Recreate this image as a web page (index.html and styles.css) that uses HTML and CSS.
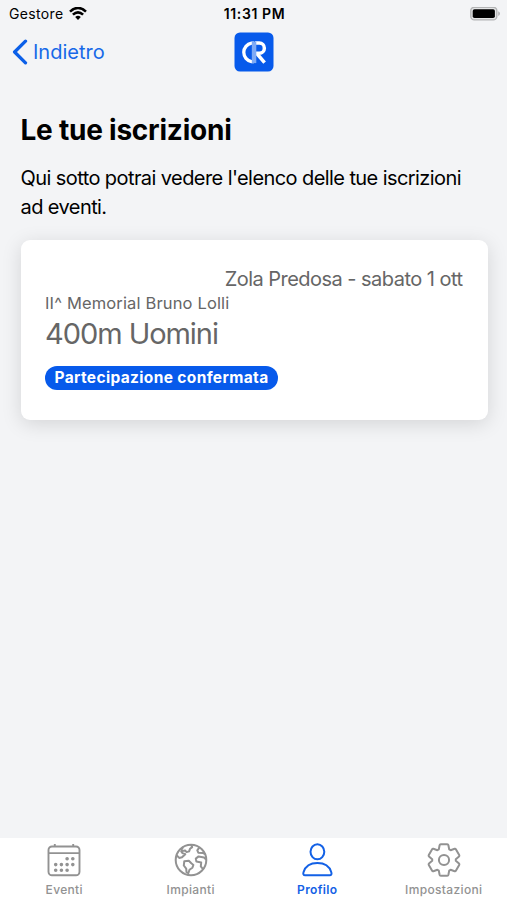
FILE: index.html
```html
<!DOCTYPE html>
<html lang="it">
<head>
  <meta charset="UTF-8">
  <meta name="viewport" content="width=device-width, initial-scale=1.0">
  <title>Le tue iscrizioni</title>
  <link rel="stylesheet" href="styles.css">
</head>
<body>
  <!-- Status bar -->
  <div class="status-bar">
    <div class="carrier">
      <span class="carrier-name">Gestore</span>
      <svg width="18" height="14" viewBox="0 0 18 14" fill="none" stroke="#000" stroke-width="2.6">
        <path d="M1 4.6Q9-2.6 17 4.6M3.9 7.6Q9 3 14.1 7.6"/>
        <path d="M6.2 10Q9 7.7 11.8 10L9 12.9Z" fill="#000" stroke="none"/>
      </svg>
    </div>
    <span class="clock">11:31 PM</span>
    <svg class="battery" width="30" height="14" viewBox="0 0 30 14">
      <rect x="0.8" y="0.3" width="26" height="12.6" rx="3.5" fill="#e4e5e6" stroke="#b3b4b5" stroke-width="1.4"/>
      <rect x="2.7" y="2.2" width="22.2" height="8.8" rx="1.8" fill="#000"/>
      <path d="M28.2 4.2Q30 4.9 30 6.6Q30 8.3 28.2 9Z" fill="#b3b4b5"/>
    </svg>
  </div>

  <!-- Navigation -->
  <header class="toolbar">
    <a class="back-button" href="#">
      <svg width="16" height="26" viewBox="0 0 16 26" fill="none" stroke="#0b5fe8" stroke-width="3.3" stroke-linecap="round" stroke-linejoin="round">
        <path d="M13.5 2.2L2.6 13L13.5 23.8"/>
      </svg>
      <span>Indietro</span>
    </a>
    <svg class="logo" width="40" height="40" viewBox="0 0 40 40">
      <rect x="0.5" y="0.5" width="39" height="39" rx="5.5" fill="#075aeb"/>
      <path d="M20 11.1H17.5A9.4 9.4 0 0 0 17.5 29.6H20" fill="none" stroke="#fff" stroke-width="3.3"/>
      <path d="M21 11.1H25.3A5 5 0 0 1 25.3 21.2H22.5L30.6 30.6" fill="none" stroke="#fff" stroke-width="3.5"/>
      <path d="M17.8 9.5H22.3V31.1H17.8Z" fill="#7faaf5"/>
    </svg>
  </header>

  <!-- Page content -->
  <main class="content">
    <h1>Le tue iscrizioni</h1>
    <p class="intro">Qui sotto potrai vedere l'elenco delle tue iscrizioni ad eventi.</p>

    <div class="card">
      <div class="card-place">Zola Predosa - sabato 1 ott</div>
      <div class="card-event">II^ Memorial Bruno Lolli</div>
      <div class="card-race">400m Uomini</div>
      <span class="badge">Partecipazione confermata</span>
    </div>
  </main>

  <!-- Tabs -->
  <nav class="tab-bar">
    <a class="tab" href="#">
      <svg width="34" height="34" viewBox="0 0 34 34" fill="none" stroke="currentColor" stroke-width="1.9">
        <rect x="1.5" y="3.5" width="31" height="28.8" rx="3.5"/>
        <path d="M1.5 10.1H32.5M7.8 1V4M26.2 1V4"/>
        <path d="M20.1 15.8h.01M25.8 15.8h.01M8.7 21.6h.01M14.4 21.6h.01M20.1 21.6h.01M25.8 21.6h.01M8.7 27.2h.01M14.4 27.2h.01M20.1 27.2h.01" stroke-width="3.6" stroke-linecap="round"/>
      </svg>
      <span>Eventi</span>
    </a>
    <a class="tab" href="#">
      <svg width="34" height="34" viewBox="0 0 34 34" fill="none" stroke="currentColor" stroke-width="2" stroke-linejoin="round">
        <circle cx="17" cy="17" r="15.3"/>
        <path d="M9.2 4.2L7.3 6.5L8.3 8L11.1 7.5L12.6 9.1L15.1 8.4L16 5.8L18.2 4.1L16.9 1.8"/>
        <path d="M2.6 12.2L5.2 14.9L8 14.3L11.3 11.2L8.5 10.1L6.8 7.9"/>
        <path d="M10.3 18.2L14.8 17.7L17.3 20.3L19.4 22L18.4 24.7L15.5 26.7L14.3 30.2L12.5 29.2L12.2 25.7L9.8 22.5Z"/>
        <path d="M25.4 4.4L23.3 7.4L24.3 9.7L28.9 9.9L31 11.2M32 16.5L30 14.4L24.6 13.4L21.8 15.6L22.4 18.6L27.2 19.4L26.8 23.3L28.9 26"/>
      </svg>
      <span>Impianti</span>
    </a>
    <a class="tab active" href="#">
      <svg width="34" height="34" viewBox="0 0 34 34" fill="none" stroke="currentColor" stroke-width="2">
        <ellipse cx="17.4" cy="8.8" rx="6.9" ry="7.5"/>
        <path d="M5.2 32.3C3.3 32.3 3 30.8 3.5 29.2C5.5 23 11 20.1 17.4 20.1S29.3 23 31.3 29.2C31.8 30.8 31.5 32.3 29.6 32.3Z"/>
      </svg>
      <span>Profilo</span>
    </a>
    <a class="tab" href="#">
      <svg width="34" height="34" viewBox="-17 -17 34 34" fill="none" stroke="currentColor" stroke-width="2" stroke-linejoin="round">
        <circle r="5.1"/>
        <path d="M-5.2-10.6L-4.4-14.8Q-4.2-15.7-3.2-15.7H3.2Q4.2-15.7 4.4-14.8L5.2-10.6L6.6-9.8L10.6-11.2Q11.5-11.5 12-10.6L15.2-5.1Q15.7-4.2 15-3.6L11.8-.8V.8L15 3.6Q15.7 4.2 15.2 5.1L12 10.6Q11.5 11.5 10.6 11.2L6.6 9.8L5.2 10.6L4.4 14.8Q4.2 15.7 3.2 15.7H-3.2Q-4.2 15.7-4.4 14.8L-5.2 10.6L-6.6 9.8L-10.6 11.2Q-11.5 11.5-12 10.6L-15.2 5.1Q-15.7 4.2-15 3.6L-11.8.8V-.8L-15-3.6Q-15.7-4.2-15.2-5.1L-12-10.6Q-11.5-11.5-10.6-11.2L-6.6-9.8Z"/>
      </svg>
      <span>Impostazioni</span>
    </a>
  </nav>
</body>
</html>
```
FILE: styles.css
```css
* {
  box-sizing: border-box;
}

body {
  margin: 0;
  height: 100vh;
  display: flex;
  flex-direction: column;
  background-color: #f3f4f6;
  color: #000;
  font-family: Inter, "Liberation Sans", sans-serif;
}

a {
  color: inherit;
  text-decoration: none;
}

svg {
  display: block;
  flex: none;
}

.status-bar {
  height: 27px;
  display: grid;
  grid-template-columns: 1fr auto 1fr;
  align-items: center;
  padding: 0 7px 0 9px;
  font-size: 14px;
}

.carrier {
  display: flex;
  align-items: center;
  gap: 5px;
}

.carrier-name {
  letter-spacing: 0.35px;
}

.clock {
  font-weight: 600;
  letter-spacing: 0.6px;
}

.battery {
  justify-self: end;
}

.toolbar {
  height: 50px;
  display: grid;
  grid-template-columns: 1fr auto 1fr;
  align-items: center;
  padding: 0 12px;
}

.back-button {
  display: flex;
  align-items: center;
  gap: 5px;
  color: #1769e8;
  font-size: 20px;
}

.content {
  flex: 1;
  padding: 35px 19.5px 0 20.5px;
}

h1 {
  margin: 0;
  font-size: 28px;
  line-height: 36px;
  font-weight: 700;
  letter-spacing: -0.23px;
}

.intro {
  margin: 16px 0 18px;
  padding-right: 10px;
  font-size: 20px;
  line-height: 29px;
  letter-spacing: -0.58px;
}

.card {
  height: 180px;
  padding: 26px 25px 0 24.5px;
  background-color: #fff;
  border-radius: 9px;
  box-shadow: 0 4px 20px rgba(0, 0, 0, 0.13);
  color: #666;
}

.card-place {
  font-size: 20px;
  line-height: 26px;
  letter-spacing: -0.53px;
  text-align: right;
}

.card-event {
  font-size: 16.5px;
  line-height: 22px;
  letter-spacing: 0.15px;
}

.card-race {
  font-size: 29px;
  line-height: 40px;
  letter-spacing: -1.05px;
}

.badge {
  display: block;
  width: 233px;
  height: 24px;
  margin-top: 12px;
  border-radius: 12px;
  background-color: #075aeb;
  color: #fff;
  font-size: 15.5px;
  line-height: 24px;
  font-weight: 700;
  letter-spacing: 0.35px;
  text-align: center;
  white-space: nowrap;
}

.tab-bar {
  height: 62px;
  display: grid;
  grid-template-columns: repeat(4, 1fr);
  padding-left: 1px;
  background-color: #fff;
}

.tab {
  display: flex;
  flex-direction: column;
  align-items: center;
  gap: 5px;
  padding-top: 5px;
  color: #929292;
  font-size: 12px;
  line-height: 15px;
  font-weight: 500;
  letter-spacing: 0.35px;
}

.tab.active {
  color: #1361e6;
  font-weight: 600;
}
```
